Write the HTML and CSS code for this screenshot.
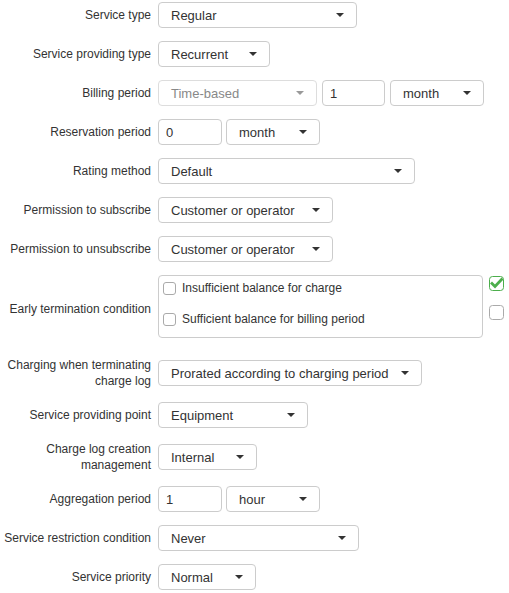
FILE: index.html
```html
<!DOCTYPE html>
<html lang="en">
<head>
    <meta charset="UTF-8">
    <title>Service settings</title>
    <link rel="stylesheet" href="styles.css">
</head>
<body>
    <form class="service-form">
        <div class="row">
            <label class="row-label">Service type</label>
            <div class="select w-199"><span>Regular</span><i class="caret"></i></div>
        </div>
        <div class="row">
            <label class="row-label">Service providing type</label>
            <div class="select w-112"><span>Recurrent</span><i class="caret"></i></div>
        </div>
        <div class="row">
            <label class="row-label">Billing period</label>
            <div class="select w-159 disabled"><span>Time-based</span><i class="caret"></i></div>
            <input class="text-input w-63 gap-5" type="text" value="1">
            <div class="select w-94 gap-5"><span>month</span><i class="caret"></i></div>
        </div>
        <div class="row">
            <label class="row-label">Reservation period</label>
            <input class="text-input w-64" type="text" value="0">
            <div class="select w-94 gap-4"><span>month</span><i class="caret"></i></div>
        </div>
        <div class="row">
            <label class="row-label">Rating method</label>
            <div class="select w-257"><span>Default</span><i class="caret"></i></div>
        </div>
        <div class="row">
            <label class="row-label">Permission to subscribe</label>
            <div class="select w-175"><span>Customer or operator</span><i class="caret"></i></div>
        </div>
        <div class="row">
            <label class="row-label">Permission to unsubscribe</label>
            <div class="select w-175"><span>Customer or operator</span><i class="caret"></i></div>
        </div>
        <div class="row row-box">
            <label class="row-label box-label">Early termination condition</label>
            <div class="check-box">
                <div class="check-line"><span class="check"></span>Insufficient balance for charge</div>
                <div class="check-line"><span class="check"></span>Sufficient balance for billing period</div>
            </div>
            <div class="side-checks">
                <svg class="side-check" width="15" height="15" viewBox="0 0 15 15">
                    <rect x="0.5" y="0.5" width="14" height="14" rx="3" fill="#fff" stroke="#4cae4c"/>
                    <path d="M3 7.5 L6 10.5 L12.5 3.5" fill="none" stroke="#4cae4c" stroke-width="2.8" stroke-linecap="square"/>
                </svg>
                <svg class="side-check" width="15" height="15" viewBox="0 0 15 15">
                    <rect x="0.5" y="0.5" width="14" height="14" rx="3" fill="#fff" stroke="#aaa"/>
                </svg>
            </div>
        </div>
        <div class="row">
            <label class="row-label">Charging when terminating charge log</label>
            <div class="select w-264"><span>Prorated according to charging period</span><i class="caret"></i></div>
        </div>
        <div class="row">
            <label class="row-label">Service providing point</label>
            <div class="select w-150"><span>Equipment</span><i class="caret"></i></div>
        </div>
        <div class="row">
            <label class="row-label">Charge log creation management</label>
            <div class="select w-99"><span>Internal</span><i class="caret"></i></div>
        </div>
        <div class="row">
            <label class="row-label">Aggregation period</label>
            <input class="text-input w-64" type="text" value="1">
            <div class="select w-94 gap-4"><span>hour</span><i class="caret"></i></div>
        </div>
        <div class="row">
            <label class="row-label">Service restriction condition</label>
            <div class="select w-201"><span>Never</span><i class="caret"></i></div>
        </div>
        <div class="row">
            <label class="row-label">Service priority</label>
            <div class="select w-98"><span>Normal</span><i class="caret"></i></div>
        </div>
    </form>
</body>
</html>
```

FILE: styles.css
```css
body {
    margin: 0;
    background-color: #fff;
    color: #333;
    font-family: "Liberation Sans", Arial, sans-serif;
}
.service-form {
    padding-top: 2px;
}
.row {
    display: flex;
    align-items: center;
    margin-bottom: 13px;
}
.row-label {
    width: 151px;
    margin-right: 7px;
    flex-shrink: 0;
    text-align: right;
    font-size: 12px;
    line-height: 16px;
}

/* dropdown buttons */
.select {
    box-sizing: border-box;
    height: 26px;
    padding: 0 12px;
    display: flex;
    align-items: center;
    justify-content: space-between;
    border: 1px solid #ccc;
    border-radius: 4px;
    background-color: #fff;
    font-size: 13px;
    white-space: nowrap;
}
.caret {
    width: 0;
    height: 0;
    border-top: 4px solid #333;
    border-left: 4px solid transparent;
    border-right: 4px solid transparent;
}
.select.disabled {
    border-color: #ddd;
    color: #888;
}
.select.disabled .caret {
    border-top-color: #999;
}

.text-input {
    box-sizing: border-box;
    height: 26px;
    margin: 0;
    padding: 0 7px;
    border: 1px solid #ccc;
    border-radius: 4px;
    font-family: inherit;
    font-size: 13px;
    color: #333;
}

.w-63 { width: 63px; }
.w-64 { width: 64px; }
.w-94 { width: 94px; }
.w-98 { width: 98px; }
.w-99 { width: 99px; }
.w-112 { width: 112px; }
.w-150 { width: 150px; }
.w-159 { width: 159px; }
.w-175 { width: 175px; }
.w-199 { width: 199px; }
.w-201 { width: 201px; }
.w-257 { width: 257px; }
.w-264 { width: 264px; }
.gap-4 { margin-left: 4px; }
.gap-5 { margin-left: 5px; }

/* early termination block */
.row-box {
    margin-bottom: 19px;
}
.box-label {
    padding-top: 5px;
}
.check-box {
    box-sizing: border-box;
    width: 325px;
    height: 63px;
    padding: 0 4px 6px 4px;
    border: 1px solid #ccc;
    border-radius: 4px;
    display: flex;
    flex-direction: column;
    gap: 7px;
    font-size: 12px;
}
.check-line {
    height: 24px;
    display: flex;
    align-items: center;
}
.check {
    box-sizing: border-box;
    width: 13px;
    height: 13px;
    margin-right: 6px;
    border: 1px solid #aaa;
    border-radius: 3px;
    background-color: #fff;
}
.side-checks {
    align-self: flex-start;
    margin-left: 6px;
    padding-top: 1px;
    display: flex;
    flex-direction: column;
    gap: 14px;
}
.side-check {
    display: block;
}
```
